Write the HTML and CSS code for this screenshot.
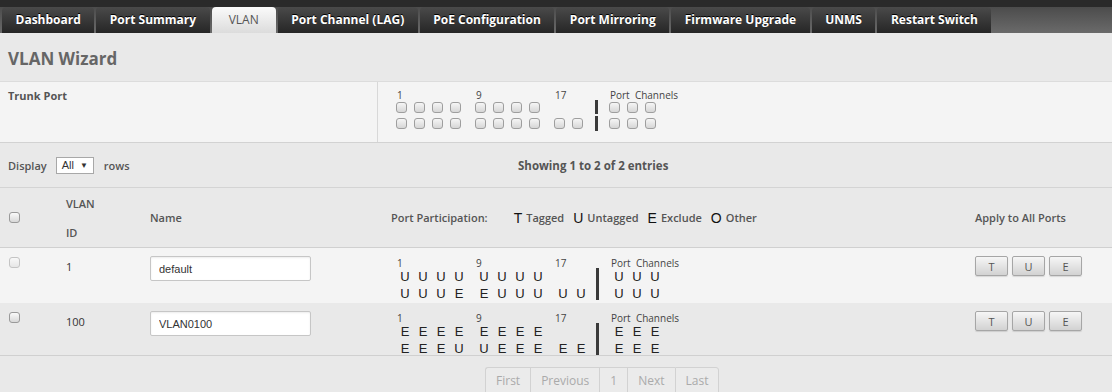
FILE: index.html
```html
<!DOCTYPE html>
<html lang="en">
<head>
    <meta charset="UTF-8">
    <title>VLAN Wizard</title>
    <link rel="stylesheet" href="styles.css">
</head>
<body>
    <nav class="tabs">
        <a class="tab">Dashboard</a>
        <a class="tab">Port Summary</a>
        <a class="tab active">VLAN</a>
        <a class="tab">Port Channel (LAG)</a>
        <a class="tab">PoE Configuration</a>
        <a class="tab">Port Mirroring</a>
        <a class="tab">Firmware Upgrade</a>
        <a class="tab">UNMS</a>
        <a class="tab">Restart Switch</a>
    </nav>

    <h1 class="title">VLAN Wizard</h1>

    <div class="trunk">
        <div class="trunk-label">Trunk Port</div>
        <div class="trunk-ports">
            <div class="ports boxes">
                <div class="grp">
                    <div class="lbl">1</div>
                    <div class="line"><span class="box"></span><span class="box"></span><span class="box"></span><span class="box"></span></div>
                    <div class="line"><span class="box"></span><span class="box"></span><span class="box"></span><span class="box"></span></div>
                </div>
                <div class="grp">
                    <div class="lbl">9</div>
                    <div class="line"><span class="box"></span><span class="box"></span><span class="box"></span><span class="box"></span></div>
                    <div class="line"><span class="box"></span><span class="box"></span><span class="box"></span><span class="box"></span></div>
                </div>
                <div class="grp g17">
                    <div class="lbl">17</div>
                    <div class="line"></div>
                    <div class="line"><span class="box"></span><span class="box"></span></div>
                </div>
                <div class="sep"></div>
                <div class="grp pc">
                    <div class="lbl">Port&nbsp; Channels</div>
                    <div class="line"><span class="box"></span><span class="box"></span><span class="box"></span></div>
                    <div class="line"><span class="box"></span><span class="box"></span><span class="box"></span></div>
                </div>
            </div>
        </div>
    </div>

    <div class="toolbar">
        <div class="length">Display <span class="select">All <span class="caret">&#9660;</span></span> rows</div>
        <div class="info">Showing 1 to 2 of 2 entries</div>
    </div>

    <div class="table">
        <div class="row head">
            <div class="cell chk-cell"><span class="chk"></span></div>
            <div class="cell vid">VLAN<br>ID</div>
            <div class="cell">Name</div>
            <div class="cell legend">
                Port Participation:
                <span class="key first"><span class="k">T</span>Tagged</span>
                <span class="key"><span class="k">U</span>Untagged</span>
                <span class="key"><span class="k">E</span>Exclude</span>
                <span class="key"><span class="k">O</span>Other</span>
            </div>
            <div class="cell">Apply to All Ports</div>
        </div>

        <div class="row odd">
            <div class="cell chk-cell"><span class="chk disabled"></span></div>
            <div class="cell id">1</div>
            <div class="cell"><input class="name" type="text" value="default"></div>
            <div class="cell">
                <div class="ports">
                    <div class="grp">
                        <div class="lbl">1</div>
                        <div class="line"><span class="p">U</span><span class="p">U</span><span class="p">U</span><span class="p">U</span></div>
                        <div class="line"><span class="p">U</span><span class="p">U</span><span class="p">U</span><span class="p">E</span></div>
                    </div>
                    <div class="grp">
                        <div class="lbl">9</div>
                        <div class="line"><span class="p">U</span><span class="p">U</span><span class="p">U</span><span class="p">U</span></div>
                        <div class="line"><span class="p">E</span><span class="p">U</span><span class="p">U</span><span class="p">U</span></div>
                    </div>
                    <div class="grp g17">
                        <div class="lbl">17</div>
                        <div class="line"></div>
                        <div class="line"><span class="p">U</span><span class="p">U</span></div>
                    </div>
                    <div class="sep"></div>
                    <div class="grp pc">
                        <div class="lbl">Port&nbsp; Channels</div>
                        <div class="line"><span class="p">U</span><span class="p">U</span><span class="p">U</span></div>
                        <div class="line"><span class="p">U</span><span class="p">U</span><span class="p">U</span></div>
                    </div>
                </div>
            </div>
            <div class="cell">
                <div class="btns"><button class="btn">T</button><button class="btn">U</button><button class="btn">E</button></div>
            </div>
        </div>

        <div class="row even">
            <div class="cell chk-cell"><span class="chk"></span></div>
            <div class="cell id">100</div>
            <div class="cell"><input class="name" type="text" value="VLAN0100"></div>
            <div class="cell">
                <div class="ports">
                    <div class="grp">
                        <div class="lbl">1</div>
                        <div class="line"><span class="p">E</span><span class="p">E</span><span class="p">E</span><span class="p">E</span></div>
                        <div class="line"><span class="p">E</span><span class="p">E</span><span class="p">E</span><span class="p">U</span></div>
                    </div>
                    <div class="grp">
                        <div class="lbl">9</div>
                        <div class="line"><span class="p">E</span><span class="p">E</span><span class="p">E</span><span class="p">E</span></div>
                        <div class="line"><span class="p">U</span><span class="p">E</span><span class="p">E</span><span class="p">E</span></div>
                    </div>
                    <div class="grp g17">
                        <div class="lbl">17</div>
                        <div class="line"></div>
                        <div class="line"><span class="p">E</span><span class="p">E</span></div>
                    </div>
                    <div class="sep"></div>
                    <div class="grp pc">
                        <div class="lbl">Port&nbsp; Channels</div>
                        <div class="line"><span class="p">E</span><span class="p">E</span><span class="p">E</span></div>
                        <div class="line"><span class="p">E</span><span class="p">E</span><span class="p">E</span></div>
                    </div>
                </div>
            </div>
            <div class="cell">
                <div class="btns"><button class="btn">T</button><button class="btn">U</button><button class="btn">E</button></div>
            </div>
        </div>
    </div>

    <div class="pager">
        <span class="pg">First</span>
        <span class="pg">Previous</span>
        <span class="pg">1</span>
        <span class="pg">Next</span>
        <span class="pg">Last</span>
    </div>
</body>
</html>
```

FILE: styles.css
```css
body { margin: 0; font-family: "Open Sans", "Liberation Sans", sans-serif; font-size: 11px; color: #555; background: #e9e9e9; }

/* top navigation */
.tabs { display: flex; align-items: flex-end; gap: 2px; height: 33px; padding-left: 2px; box-sizing: border-box; background: linear-gradient(#2a2a2a 0 7px, #4c4c4c 7px, #6a6a6a); }
.tab { height: 26px; line-height: 26px; padding: 0 13.5px; border-radius: 4px 4px 0 0; background: linear-gradient(#4a4a4a, #262626); color: #fff; font-size: 12px; font-weight: 700; text-shadow: 0 -1px 0 #000; white-space: nowrap; }
.tab.active { background: linear-gradient(#fafafa, #dcdcdc); color: #555; font-weight: 400; text-shadow: none; padding: 0 17px; }

.title { margin: 0; height: 48px; box-sizing: border-box; padding: 3px 0 0 8px; line-height: 45px; font-size: 17px; font-weight: 700; color: #666; }

/* trunk port panel */
.trunk { display: flex; height: 62px; box-sizing: border-box; background: #f4f4f4; border-top: 1px solid #dcdcdc; border-bottom: 1px solid #d2d2d2; }
.trunk-label { width: 378px; box-sizing: border-box; padding: 6px 8px; line-height: 15px; border-right: 1px solid #d8d8d8; font-weight: 700; }
.trunk-ports { padding: 8px 0 0 18px; }

/* port grids */
.ports { display: flex; align-items: flex-start; }
.grp { margin-right: 7px; }
.grp.g17, .grp.pc { margin-right: 0; }
.lbl { height: 10px; padding-left: 1px; font-size: 10px; line-height: 10px; color: #444; white-space: nowrap; }
.line { display: flex; height: 17px; }
.p { width: 18px; text-align: center; font-family: "Liberation Sans", sans-serif; font-size: 13px; line-height: 17px; color: #222; }
.sep { width: 3px; height: 32px; margin: 10px 11px 0 6px; background: #3a3a3a; }

.boxes .line { height: 16px; }
.boxes .sep { height: 31px; margin: 10px 11px 0 5px; background: linear-gradient(#3a3a3a 0 14px, transparent 14px 16px, #3a3a3a 16px); }
.box { width: 11px; height: 11px; margin: 2px 7px 0 0; box-sizing: border-box; border: 1px solid #9e9e9e; border-radius: 3px; background: linear-gradient(#f6f6f6, #d6d6d6); }

/* display / info bar */
.toolbar { display: grid; grid-template-columns: 518px auto; align-items: center; height: 45px; box-sizing: border-box; border-bottom: 1px solid #d4d4d4; }
.length { display: flex; align-items: center; padding-left: 8px; font-weight: 600; }
.select { display: inline-flex; align-items: center; gap: 6px; height: 15px; margin: 0 10px 0 9px; padding: 0 5px; border: 1px solid #a8a8a8; background: #fff; font-family: "Liberation Sans", sans-serif; font-weight: 400; color: #333; }
.caret { font-size: 8px; }
.info { font-size: 11.5px; font-weight: 700; }

/* table */
.row { display: grid; grid-template-columns: 58px 84px 241px 584px 145px; }
.cell { padding-left: 8px; }
.chk-cell { padding-left: 9px; }
.head { height: 60px; box-sizing: border-box; align-items: center; border-bottom: 1px solid #d0d0d0; font-weight: 600; }
.vid { line-height: 29px; }
.chk { display: block; width: 11px; height: 11px; box-sizing: border-box; border: 1px solid #9a9a9a; border-radius: 3px; background: linear-gradient(#fafafa, #d8d8d8); }
.chk.disabled { border-color: #c4c4c4; background: linear-gradient(#f8f8f8, #e6e6e6); }

.legend { display: flex; align-items: center; white-space: nowrap; }
.key { display: flex; align-items: center; margin-left: 9px; }
.key.first { margin-left: 26px; }
.k { margin-right: 4px; font-family: "Liberation Sans", sans-serif; font-size: 14px; font-weight: 400; color: #111; }

.odd, .even { align-items: start; }
.odd .cell, .even .cell { padding-top: 8px; }
.odd { height: 55px; background: #f4f4f4; }
.even { height: 53px; box-sizing: border-box; border-bottom: 1px solid #d0d0d0; }
.odd .chk, .even .chk { margin-top: 1px; }
.odd .cell.id, .even .cell.id { padding-top: 11px; line-height: 15px; color: #333; }
.odd .ports, .even .ports { margin: 2px 0 0 5px; }

.name { width: 161px; height: 25px; box-sizing: border-box; margin: 0; padding: 0 0 0 8px; border: 1px solid #c6c6c6; border-radius: 2px; background: #fff; box-shadow: inset 0 1px 2px rgba(0,0,0,.08); font-family: "Liberation Sans", sans-serif; font-size: 11px; color: #333; }

.btns { display: flex; gap: 4px; }
.btn { width: 33px; height: 20px; box-sizing: border-box; padding: 0; border: 1px solid #a6a6a6; border-radius: 2px; background: linear-gradient(#f6f6f6, #d2d2d2); box-shadow: 0 1px 1px rgba(0,0,0,.12); font-family: "Open Sans", sans-serif; font-size: 11px; color: #555; }

/* pagination */
.pager { display: flex; margin: 11px 0 0 485px; }
.pg { height: 26px; line-height: 26px; padding: 0 10px; border: 1px solid #d2d2d2; border-right: none; background: #ebebeb; color: #aaa; font-size: 12px; }
.pg:first-child { border-radius: 3px 0 0 3px; }
.pg:last-child { border-right: 1px solid #d2d2d2; border-radius: 0 3px 3px 0; }
```
